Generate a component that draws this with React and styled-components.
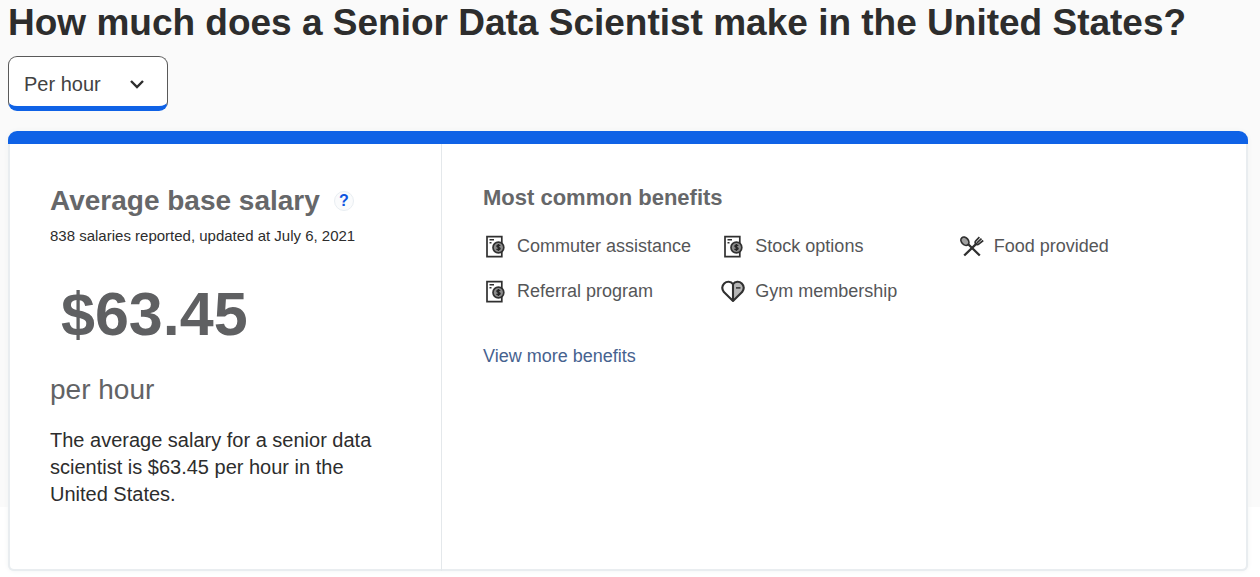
import React from "react";
import styled, { createGlobalStyle } from "styled-components";

const GlobalStyle = createGlobalStyle`
  * { box-sizing: border-box; }
  body {
    margin: 0;
    background: linear-gradient(#fafafa 507px, #ffffff 507px) no-repeat;
    font-family: "Liberation Sans", Arial, sans-serif;
    color: #2d2d2d;
  }
`;

const Page = styled.main`
  padding: 0 12px 6px 8px;
`;

const Title = styled.h1`
  margin: 0;
  font-size: 37px;
  line-height: 46px;
  font-weight: 700;
`;

const PeriodPicker = styled.label`
  display: grid;
  align-items: center;
  width: 160px;
  height: 55px;
  margin-top: 10px;
  background: #ffffff;
  border: 1px solid #595959;
  border-bottom: 5px solid #0f62e6;
  border-radius: 9px;
`;

const PeriodSelect = styled.select`
  grid-area: 1 / 1;
  width: 100%;
  height: 48px;
  padding: 5px 44px 0 15px;
  appearance: none;
  border: 0;
  background: transparent;
  font: 20px "Liberation Sans", Arial, sans-serif;
  color: #424242;
`;

const Chevron = styled.svg`
  grid-area: 1 / 1;
  justify-self: end;
  margin: 5px 22px 0 0;
  pointer-events: none;
`;

const Card = styled.section`
  display: flex;
  margin-top: 20px;
  border-top: 13px solid #0f62e6;
  border-radius: 9px 9px 6px 6px;
  background: #ffffff;
  box-shadow: inset 2px 0 #e9edf0, inset -2px 0 #e9edf0, inset 0 -2px #e9edf0, 0 0 5px #f0f2f3;
`;

const SalaryPanel = styled.div`
  width: 35%;
  padding: 40px 40px 63px 42px;
  border-right: 1px solid #e4e8eb;
`;

const BenefitsPanel = styled.div`
  flex: 1;
  padding: 40px 50px 40px 41px;
`;

const SalaryHeading = styled.div`
  display: flex;
  align-items: center;
  gap: 14px;
  white-space: nowrap;
`;

const SalaryTitle = styled.h2`
  margin: 0;
  font-size: 28px;
  line-height: 34px;
  color: #666769;
`;

const HelpButton = styled.button`
  flex: none;
  width: 20px;
  height: 20px;
  padding: 0;
  border: 1px solid #e9eef2;
  border-radius: 50%;
  background: #fafbfc;
  color: #0f55e0;
  font: bold 16px/18px "Liberation Sans", Arial, sans-serif;
`;

const Reported = styled.p`
  margin: 9px 0 0;
  font-size: 15px;
  line-height: 18px;
  white-space: nowrap;
`;

const Amount = styled.p`
  margin: 33px 0 0;
  padding-left: 11px;
  font-size: 61px;
  line-height: 72px;
  font-weight: 700;
  color: #5f6062;
`;

const Unit = styled.p`
  margin: 23px 0 0;
  font-size: 28px;
  line-height: 34px;
  color: #626365;
`;

const Summary = styled.p`
  margin: 20px 0 0;
  font-size: 20px;
  line-height: 27px;
`;

const BenefitsTitle = styled.h3`
  margin: 0;
  font-size: 22px;
  line-height: 28px;
  color: #666769;
`;

const BenefitList = styled.ul`
  display: grid;
  grid-template-columns: repeat(3, 1fr);
  row-gap: 21px;
  margin: 22px 0 0;
  padding: 0;
  list-style: none;
`;

const Benefit = styled.li`
  display: flex;
  align-items: center;
  gap: 10px;
  font-size: 18px;
  line-height: 24px;
  color: #555658;
  white-space: nowrap;
`;

const MoreLink = styled.a`
  display: inline-block;
  margin-top: 42px;
  font-size: 18px;
  line-height: 22px;
  color: #46628f;
  text-decoration: none;
`;

function MoneyIcon() {
  return (
    <svg width="24" height="24" viewBox="0 0 24 24" fill="none" aria-hidden="true">
      <path d="M4 2.6h14.8v20H4Z" stroke="#303030" strokeWidth="1.7" />
      <path d="M6.5 5.8h4.5M6.5 8.8h2" stroke="#303030" strokeWidth="1.4" />
      <circle cx="15.4" cy="13.5" r="5.4" fill="#8c8c8c" stroke="#303030" strokeWidth="1.7" />
      <path d="M17.2 11.8c-.7-.8-3.3-.9-3.3.5 0 1.5 3.2.8 3.2 2.3 0 1.4-2.8 1.4-3.6.3M15.4 10v7" stroke="#252525" strokeWidth="1.4" />
    </svg>
  );
}

function HeartIcon() {
  return (
    <svg width="24" height="24" viewBox="0 0 24 24" fill="none" aria-hidden="true">
      <path d="M12 5c2-3 6-3 8.5-.6 2.6 2.7 2.3 6 .1 8.3L12 21.5Z" fill="#b5b5b5" />
      <path d="M12 5.2C9.8 2 5.7 2 3.2 4.5s-2.2 5.9-.3 8.6L12 22l9.1-8.9c1.9-2.7 2.2-6.1-.3-8.6S14.2 2 12 5.2V21" stroke="#303030" strokeWidth="2.1" strokeLinejoin="round" />
      <path d="M15 8.9h4.5" stroke="#303030" strokeWidth="1.5" />
    </svg>
  );
}

function FoodIcon() {
  return (
    <svg width="24" height="24" viewBox="0 0 24 24" fill="none" aria-hidden="true">
      <path d="m8 10 11.8 11.5M4.2 21.5 17 9.2" stroke="#303030" strokeWidth="2.3" />
      <ellipse cx="4.9" cy="7.2" rx="3.4" ry="4.6" transform="rotate(-42 4.9 7.2)" fill="#a0a0a0" stroke="#303030" strokeWidth="1.7" />
      <path d="m19.4 3.2-3.6 3.6c-1 1-.8 2.3 0 3.1s2.2.9 3.2 0l4.2-3.4M21.5 4.6 17 8.8" stroke="#303030" strokeWidth="1.7" />
    </svg>
  );
}

const benefits = [
  ["Commuter assistance", MoneyIcon],
  ["Stock options", MoneyIcon],
  ["Food provided", FoodIcon],
  ["Referral program", MoneyIcon],
  ["Gym membership", HeartIcon],
];

export default function App() {
  return (
    <Page>
      <GlobalStyle />
      <Title>How much does a Senior Data Scientist make in the United States?</Title>
      <PeriodPicker>
        <PeriodSelect aria-label="Pay period" defaultValue="hour">
          <option value="hour">Per hour</option>
        </PeriodSelect>
        <Chevron width="16" height="16" viewBox="0 0 16 16" fill="none" aria-hidden="true">
          <path d="m2 5 6 6 6-6" stroke="#2d2d2d" strokeWidth="2.4" />
        </Chevron>
      </PeriodPicker>
      <Card>
        <SalaryPanel>
          <SalaryHeading>
            <SalaryTitle>Average base salary</SalaryTitle>
            <HelpButton type="button" aria-label="About average base salary">?</HelpButton>
          </SalaryHeading>
          <Reported>838 salaries reported, updated at July 6, 2021</Reported>
          <Amount>$63.45</Amount>
          <Unit>per hour</Unit>
          <Summary>
            The average salary for a senior data scientist is $63.45 per hour in the United States.
          </Summary>
        </SalaryPanel>
        <BenefitsPanel>
          <BenefitsTitle>Most common benefits</BenefitsTitle>
          <BenefitList>
            {benefits.map(([name, Icon]) => (
              <Benefit key={name}>
                <Icon />
                {name}
              </Benefit>
            ))}
          </BenefitList>
          <MoreLink href="#benefits">View more benefits</MoreLink>
        </BenefitsPanel>
      </Card>
    </Page>
  );
}
